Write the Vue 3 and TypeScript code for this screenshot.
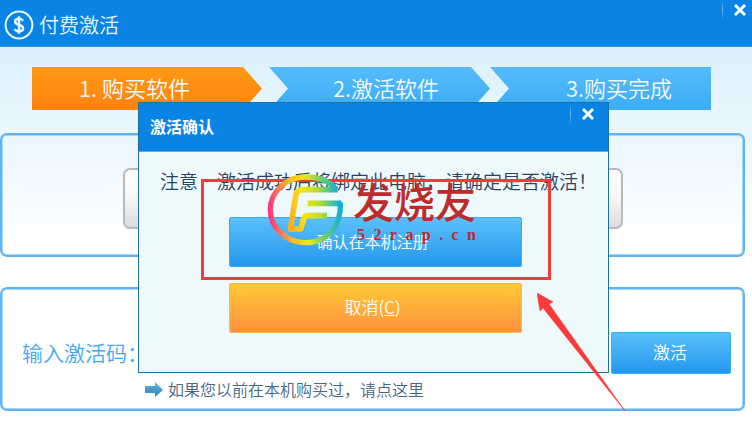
<script setup lang="ts">
import { ref } from 'vue'

interface Step {
  id: number
  text: string
}

const steps: Step[] = [
  { id: 1, text: '1. 购买软件' },
  { id: 2, text: '2.激活软件' },
  { id: 3, text: '3.购买完成' },
]

const code = ref('')
const dialogOpen = ref(true)
const domain = '52rap.cn'

function closeDialog(): void {
  dialogOpen.value = false
}
</script>

<template>
  <div class="window">
    <header class="titlebar">
      <svg class="coin" viewBox="0 0 30 30" aria-hidden="true">
        <circle cx="15" cy="15" r="13.4" fill="none" stroke="#e8f7ff" stroke-width="2" />
        <path d="M19 10.8C18.2 9.4 16.8 8.8 15 8.8c-2.400 0-3.900 1.200-3.900 3 0 4.200 8 2.200 8 6.400 0 1.900-1.700 3.100-4.100 3.100-2.100 0-3.600-.8-4.300-2.400M15 6.300v17.400" fill="none" stroke="#e8f7ff" stroke-width="2.400" />
      </svg>
      <h1 class="title">付费激活</h1>
      <button class="close" type="button" aria-label="关闭">
        <svg viewBox="0 0 12 12"><path d="M1 1l10 10M11 1L1 11" stroke="#fff" stroke-width="2.900" /></svg>
      </button>
    </header>

    <main class="body">
      <ol class="steps">
        <li v-for="s in steps" :key="s.id" class="step" :class="`step-${s.id}`">{{ s.text }}</li>
      </ol>

      <section class="panel buy">
        <button class="buy-button" type="button" aria-label="购买软件"></button>
      </section>

      <section class="panel activate">
        <div class="code-row">
          <label class="code-label" for="code">输入激活码：</label>
          <input id="code" v-model="code" class="code-input" type="text" />
          <button class="btn blue activate-button" type="button">激活</button>
        </div>
        <a class="restore" href="#">
          <svg class="arrow-icon" viewBox="0 0 20 16" aria-hidden="true">
            <defs>
              <linearGradient id="arrowFill" x1="0" y1="0" x2="0" y2="1">
                <stop offset="0" stop-color="#65b5da" />
                <stop offset="1" stop-color="#2b86b8" />
              </linearGradient>
            </defs>
            <path d="M1 5h10V1l8 8-8 7v-4H1z" fill="url(#arrowFill)" />
          </svg>
          <span>如果您以前在本机购买过，请点这里</span>
        </a>
      </section>
    </main>

    <div v-if="dialogOpen" class="dialog" role="dialog" aria-labelledby="dialog-title">
      <div class="dialog-head">
        <h2 id="dialog-title" class="dialog-title">激活确认</h2>
        <button class="close" type="button" aria-label="关闭对话框" @click="closeDialog">
          <svg viewBox="0 0 12 12"><path d="M1 1l10 10M11 1L1 11" stroke="#fff" stroke-width="2.900" /></svg>
        </button>
      </div>
      <div class="dialog-body">
        <p class="notice">注意&#12288;激活成功后将绑定此电脑，请确定是否激活！</p>
        <button class="btn blue wide" type="button">确认在本机注册</button>
        <button class="btn orange wide" type="button" @click="closeDialog"><span>取消(<u>C</u>)</span></button>
      </div>
    </div>

    <div class="highlight"></div>
    <svg class="pointer" viewBox="0 0 90 120" aria-hidden="true">
      <path d="M0 0L16 9L12 11L88 118L6 15L3 18Z" fill="#fa3a3a" stroke="#fa3a3a" stroke-width=".6" />
    </svg>

    <div class="watermark">
      <svg class="logo" viewBox="81 35 234 219" aria-hidden="true">
        <defs>
          <linearGradient id="ring" gradientUnits="userSpaceOnUse" x1="84" y1="145" x2="309" y2="130">
            <stop offset="0" stop-color="#ff2b83" />
            <stop offset=".15" stop-color="#ff7657" />
            <stop offset=".32" stop-color="#ffc31f" />
            <stop offset=".52" stop-color="#e5e91b" />
            <stop offset=".74" stop-color="#63cf71" />
            <stop offset="1" stop-color="#08a9e8" />
          </linearGradient>
          <linearGradient id="letter" gradientUnits="userSpaceOnUse" x1="145" y1="145" x2="300" y2="120">
            <stop offset="0" stop-color="#ffad25" />
            <stop offset=".3" stop-color="#f8e512" />
            <stop offset=".6" stop-color="#b5dc31" />
            <stop offset="1" stop-color="#0aaee3" />
          </linearGradient>
        </defs>
        <g fill="none" stroke-width="16" stroke-linejoin="round">
          <path d="M288 85C270 60 235 47 196 47C138 47 91 91 91 145S138 244 196 244C259 244 304 198 301 124" stroke="url(#ring)" />
          <path d="M293 85H190Q172 85 168 101L151 203H182L191 173Q194 163 204 163H261M203 126H304" stroke="url(#letter)" stroke-width="17" />
        </g>
      </svg>
      <div class="brand">
        <span class="brand-name">发烧友</span>
        <span class="brand-domain"><span v-for="(ch, i) in domain" :key="i">{{ ch }}</span></span>
      </div>
    </div>
  </div>
</template>

<style>
body {
  background: #fff;
}
</style>

<style scoped>
.window {
  position: relative;
  min-height: 100vh;
  overflow: hidden;
  font-family: "Noto Sans CJK SC", "Noto Sans", sans-serif;
  background: linear-gradient(#dcf0fd 48px, #e8f6fe 120px, #fff 256px);
}
.window * {
  box-sizing: border-box;
}
button {
  font-family: inherit;
  border: 0;
  padding: 0;
  cursor: pointer;
}
.titlebar {
  display: flex;
  align-items: center;
  height: 47px;
  padding: 4px 0 0 4px;
  gap: 5px;
  background: #0984e4;
  border-bottom: 1px solid #2b98e8;
}
.coin {
  width: 30px;
  height: 30px;
}
.title {
  flex: 1;
  margin: 0;
  font-size: 20px;
  line-height: 28px;
  font-weight: 350;
  color: #e8f6ff;
}
.close {
  display: flex;
  align-items: center;
  justify-content: flex-end;
  align-self: flex-start;
  width: 38px;
  height: 20px;
  background: linear-gradient(#0984e4, #6db9ef, #0984e4) left / 1px 100% no-repeat;
}
.close svg {
  width: 12px;
  height: 12px;
}
.titlebar .close {
  width: 30px;
  margin-top: -4px;
  padding-right: 6px;
}
.body {
  padding: 20px 7px 0 0;
}
.steps {
  display: grid;
  grid-template-columns: 237fr 221fr 221fr;
  height: 43px;
  margin: 0 34px 23px 32px;
  padding: 0;
  list-style: none;
}
.step {
  display: flex;
  align-items: center;
  padding: 0 0 4px 64px;
  font-size: 22px;
  line-height: 30px;
  font-weight: 350;
  color: #f3fbff;
  background: linear-gradient(#56bbfb, #3aacf5);
}
.step-1 {
  margin-right: 7px;
  padding-left: 47px;
  background: linear-gradient(#ff9914, #ff8210);
  clip-path: polygon(0 0, calc(100% - 19px) 0, 100% 50%, calc(100% - 19px) 100%, 0 100%);
}
.step-2 {
  clip-path: polygon(0 0, calc(100% - 19px) 0, 100% 50%, calc(100% - 19px) 100%, 0 100%, 19px 50%);
}
.step-3 {
  padding-left: 76px;
  clip-path: polygon(0 0, 100% 0, 100% 100%, 0 100%, 19px 50%);
}
.panel {
  border: 2px solid #5db5f3;
  border-radius: 7px;
  box-shadow: inset 0 0 0 1px #a9d9fa;
}
.buy {
  display: flex;
  justify-content: center;
  align-items: center;
  height: 124px;
  margin-bottom: 30px;
  padding: 7px 0 0;
  background: linear-gradient(#eaf6ff, #fff 90%);
}
.buy-button {
  width: 500px;
  height: 61px;
  border: 2px solid #b9b9bb;
  border-radius: 7px;
  background: linear-gradient(#fff, #f6f6f6 50%, #dcdcdc);
}
.activate {
  padding: 43px 12px 5px 20px;
  background: #fff;
}
.code-row {
  display: flex;
  align-items: center;
  gap: 10px;
}
.code-label {
  padding-bottom: 2px;
  font-size: 21px;
  line-height: 30px;
  font-weight: 350;
  color: #42a8f2;
}
.code-input {
  flex: 1;
  min-width: 0;
  height: 32px;
  border: 1px solid #9ccbea;
}
.btn {
  border-radius: 3px;
  color: #fff;
  font-size: 17px;
  line-height: 24px;
  font-weight: 350;
}
.blue {
  background: linear-gradient(#5cc0fb, #2397ed);
  box-shadow: inset 0 0 0 1px #37adf3;
}
.orange {
  background: linear-gradient(#ffcb35, #ff9040);
  box-shadow: inset 0 0 0 1px #ffb545;
}
.activate-button {
  width: 120px;
  height: 42px;
  padding: 0 2px 2px 0;
}
.restore {
  display: flex;
  align-items: center;
  gap: 4px;
  height: 30px;
  margin-left: 122px;
  font-size: 16px;
  line-height: 24px;
  font-weight: 350;
  color: #456686;
  text-decoration: none;
}
.arrow-icon {
  width: 20px;
  height: 16px;
}
.dialog {
  position: absolute;
  top: 102px;
  left: 138px;
  width: 471px;
  border: 1px solid #17729f;
  background: #edf9fb;
}
.dialog-head {
  display: flex;
  align-items: center;
  justify-content: space-between;
  height: 49px;
  padding-left: 11px;
  background: #0984e4;
  border-bottom: 1px solid #5cadeb;
}
.dialog-title {
  margin: 0;
  padding-bottom: 2px;
  font-size: 16px;
  line-height: 24px;
  font-weight: 700;
  color: #fff;
}
.dialog .close {
  height: 22px;
  padding-right: 14px;
}
.dialog-body {
  display: flex;
  flex-direction: column;
  align-items: center;
  gap: 16px;
  padding: 15px 0 39px 3px;
}
.notice {
  align-self: stretch;
  margin: 0 0 6px;
  padding-left: 18px;
  font-size: 19px;
  line-height: 28px;
  font-weight: 350;
  color: #2a4365;
  white-space: nowrap;
}
.wide {
  width: 293px;
  height: 50px;
  padding: 0 5px 2px 0;
}
.wide.blue {
  font-size: 16px;
}
.highlight {
  position: absolute;
  top: 179px;
  left: 201px;
  width: 350px;
  height: 101px;
  border: 3px solid #ee3b3c;
  pointer-events: none;
}
.pointer {
  position: absolute;
  top: 293px;
  left: 537px;
  width: 90px;
  height: 120px;
  pointer-events: none;
}
.watermark {
  position: absolute;
  top: 173px;
  left: 267px;
  display: flex;
  gap: 8px;
  pointer-events: none;
}
.logo {
  width: 78px;
  height: 73px;
}
.brand {
  display: flex;
  flex-direction: column;
  padding-top: 4px;
  color: #bd2b2c;
}
.brand-name {
  font-size: 41px;
  line-height: 46px;
  font-weight: 500;
}
.brand-domain {
  display: flex;
  justify-content: space-between;
  padding: 0 0 0 4px;
  font-family: "Liberation Serif", serif;
  font-size: 16px;
  line-height: 24px;
  font-weight: 700;
}
</style>
